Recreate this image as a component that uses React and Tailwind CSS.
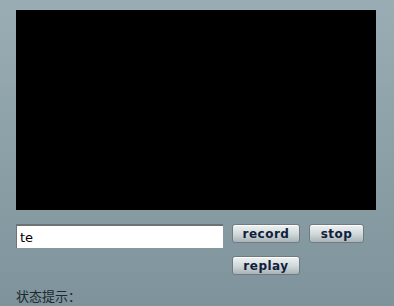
import React from 'react';

function Btn({ children, w }) {
    return (
        <button
            className={`${w} h-[19px] rounded-[3px] border border-[#6f7b80] bg-gradient-to-b from-[#eef1f2] via-[#d3dadc] to-[#a9b4b8] text-[12px] font-bold leading-none text-[#10203a] tracking-[0.5px] shadow-[inset_0_1px_0_#ffffff]`}
            style={{ fontFamily: '"DejaVu Sans", Verdana, sans-serif' }}
        >
            {children}
        </button>
    );
}

export default function App() {
    return (
        <div className="w-[394px] h-[306px] overflow-hidden bg-gradient-to-b from-[#9aadb4] to-[#7e939b] pl-4 pt-[10px]">
            <div className="w-[360px] h-[200px] bg-black" />
            <div className="flex items-start mt-[14px]">
                <input
                    defaultValue="te"
                    className="w-[207px] h-[24px] bg-white border-t-2 border-l border-[#6b7377] border-r-0 border-b-0 px-[3px] text-[13px] text-black outline-none"
                    style={{ fontFamily: '"DejaVu Sans", sans-serif' }}
                />
                <div className="ml-[9px] w-[140px] flex flex-wrap gap-x-[9px] gap-y-[13px]">
                    <Btn w="w-[68px]">record</Btn>
                    <Btn w="w-[55px]">stop</Btn>
                    <Btn w="w-[68px]">replay</Btn>
                </div>
            </div>
            <div
                className="mt-[14px] text-[13px] leading-none text-[#1c2a30]"
                style={{ fontFamily: '"Noto Sans CJK SC", sans-serif' }}
            >
                状态提示：
            </div>
        </div>
    );
}
